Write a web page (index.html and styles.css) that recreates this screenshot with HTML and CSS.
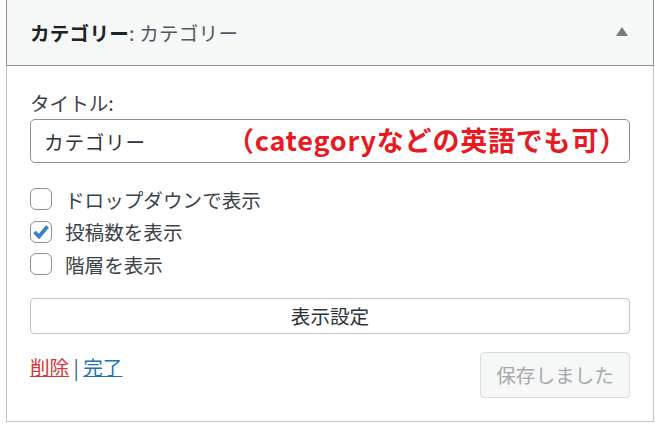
FILE: index.html
```html
<!DOCTYPE html>
<html lang="ja">
  <head>
    <meta charset="UTF-8" />
    <meta name="viewport" content="width=device-width, initial-scale=1.0" />
    <title>カテゴリー</title>
    <link rel="stylesheet" href="styles.css">
  </head>
  <body>
    <div class="widget">
      <!-- Widget header -->
      <div class="widget-top">
        <h3 class="widget-title">カテゴリー<span class="in-title">: カテゴリー</span></h3>
        <svg class="toggle" width="12" height="9" viewBox="0 0 12 9">
          <polygon points="6,0 12,9 0,9" fill="#787c82" />
        </svg>
      </div>

      <!-- Widget form -->
      <div class="widget-inside">
        <label class="field-label" for="title">タイトル:</label>
        <div class="input-wrap">
          <input type="text" id="title" class="text-input" value="カテゴリー" />
          <span class="note">（categoryなどの英語でも可）</span>
        </div>

        <div class="options">
          <label class="option"><span class="box"></span>ドロップダウンで表示</label>
          <label class="option">
            <span class="box">
              <svg width="16" height="14" viewBox="0 0 16 14">
                <path d="M1.5 7 L6 11.5 L14.5 1.5" fill="none" stroke="#3582c4" stroke-width="3.8" stroke-linejoin="miter" />
              </svg>
            </span>投稿数を表示
          </label>
          <label class="option"><span class="box"></span>階層を表示</label>
        </div>

        <button type="button" class="display-btn">表示設定</button>

        <div class="widget-control">
          <div class="links">
            <a href="#" class="remove">削除</a> | <a href="#" class="close">完了</a>
          </div>
          <button type="button" class="save-btn" disabled>保存しました</button>
        </div>
      </div>
    </div>
  </body>
</html>
```

FILE: styles.css
```css
body {
  margin: 0;
  background: #fff;
  font-family: "Noto Sans CJK JP", "Noto Sans", sans-serif;
  color: #3c434a;
}

/* Widget box */
.widget {
  width: 648px;
  margin: 0 0 0 6px;
}
.widget-top {
  display: flex;
  align-items: center;
  justify-content: space-between;
  height: 66px;
  padding: 0 25px 0 23px;
  background: #f6f7f7;
  border: 1px solid #8c8f94;
  border-top: none;
  box-sizing: border-box;
}
.widget-title {
  margin: 0;
  font-size: 19.6px;
  font-weight: 700;
  color: #1d2327;
  line-height: 28px;
  letter-spacing: 0.2px;
}
.in-title {
  font-weight: 400;
  color: #50575e;
}
.toggle {
  display: block;
  margin-top: -2px;
}

.widget-inside {
  padding: 23px;
  border: 1px solid #c3c4c7;
  border-top: none;
}

/* Title field */
.field-label {
  display: block;
  font-size: 19.6px;
  line-height: 28px;
  margin-bottom: 2px;
}
.input-wrap {
  position: relative;
}
.text-input {
  display: block;
  width: 100%;
  height: 44px;
  box-sizing: border-box;
  margin: 0;
  padding: 0 13px;
  border: 1.4px solid #8c8f94;
  border-radius: 5px;
  font-family: inherit;
  font-size: 19.6px;
  letter-spacing: 0.8px;
  color: #2c3338;
  background: #fff;
}
.note {
  position: absolute;
  right: 3px;
  top: 50%;
  transform: translateY(-54%);
  font-size: 27px;
  font-weight: 700;
  color: #e8191f;
  white-space: nowrap;
  letter-spacing: 0.8px;
}

/* Checkbox options */
.options {
  margin-top: 20px;
}
.option {
  display: flex;
  align-items: center;
  height: 32.5px;
  font-size: 19.6px;
  color: #3c434a;
}
.box {
  display: flex;
  align-items: center;
  justify-content: center;
  width: 22px;
  height: 22px;
  box-sizing: border-box;
  margin-right: 13px;
  border: 1.4px solid #8c8f94;
  border-radius: 6px;
  background: #fff;
}

/* Buttons */
.display-btn {
  display: block;
  width: 100%;
  height: 36px;
  margin-top: 17px;
  padding: 0;
  border: 1.4px solid #c3c4c7;
  border-radius: 4px;
  background: #fff;
  font-family: inherit;
  font-size: 19.6px;
  color: #2c3338;
}
.widget-control {
  display: flex;
  justify-content: space-between;
  align-items: flex-start;
  margin-top: 18px;
}
.links {
  font-size: 19.6px;
  line-height: 30px;
  color: #2c5c88;
}
.links a {
  text-decoration: underline;
}
.remove {
  color: #d63638;
}
.close {
  color: #2271b1;
}
.save-btn {
  width: 150px;
  height: 46px;
  padding: 0;
  border: 1.4px solid #dcdcde;
  border-radius: 4px;
  background: #f6f7f7;
  font-family: inherit;
  font-size: 19.6px;
  color: #a7aaad;
}
```
